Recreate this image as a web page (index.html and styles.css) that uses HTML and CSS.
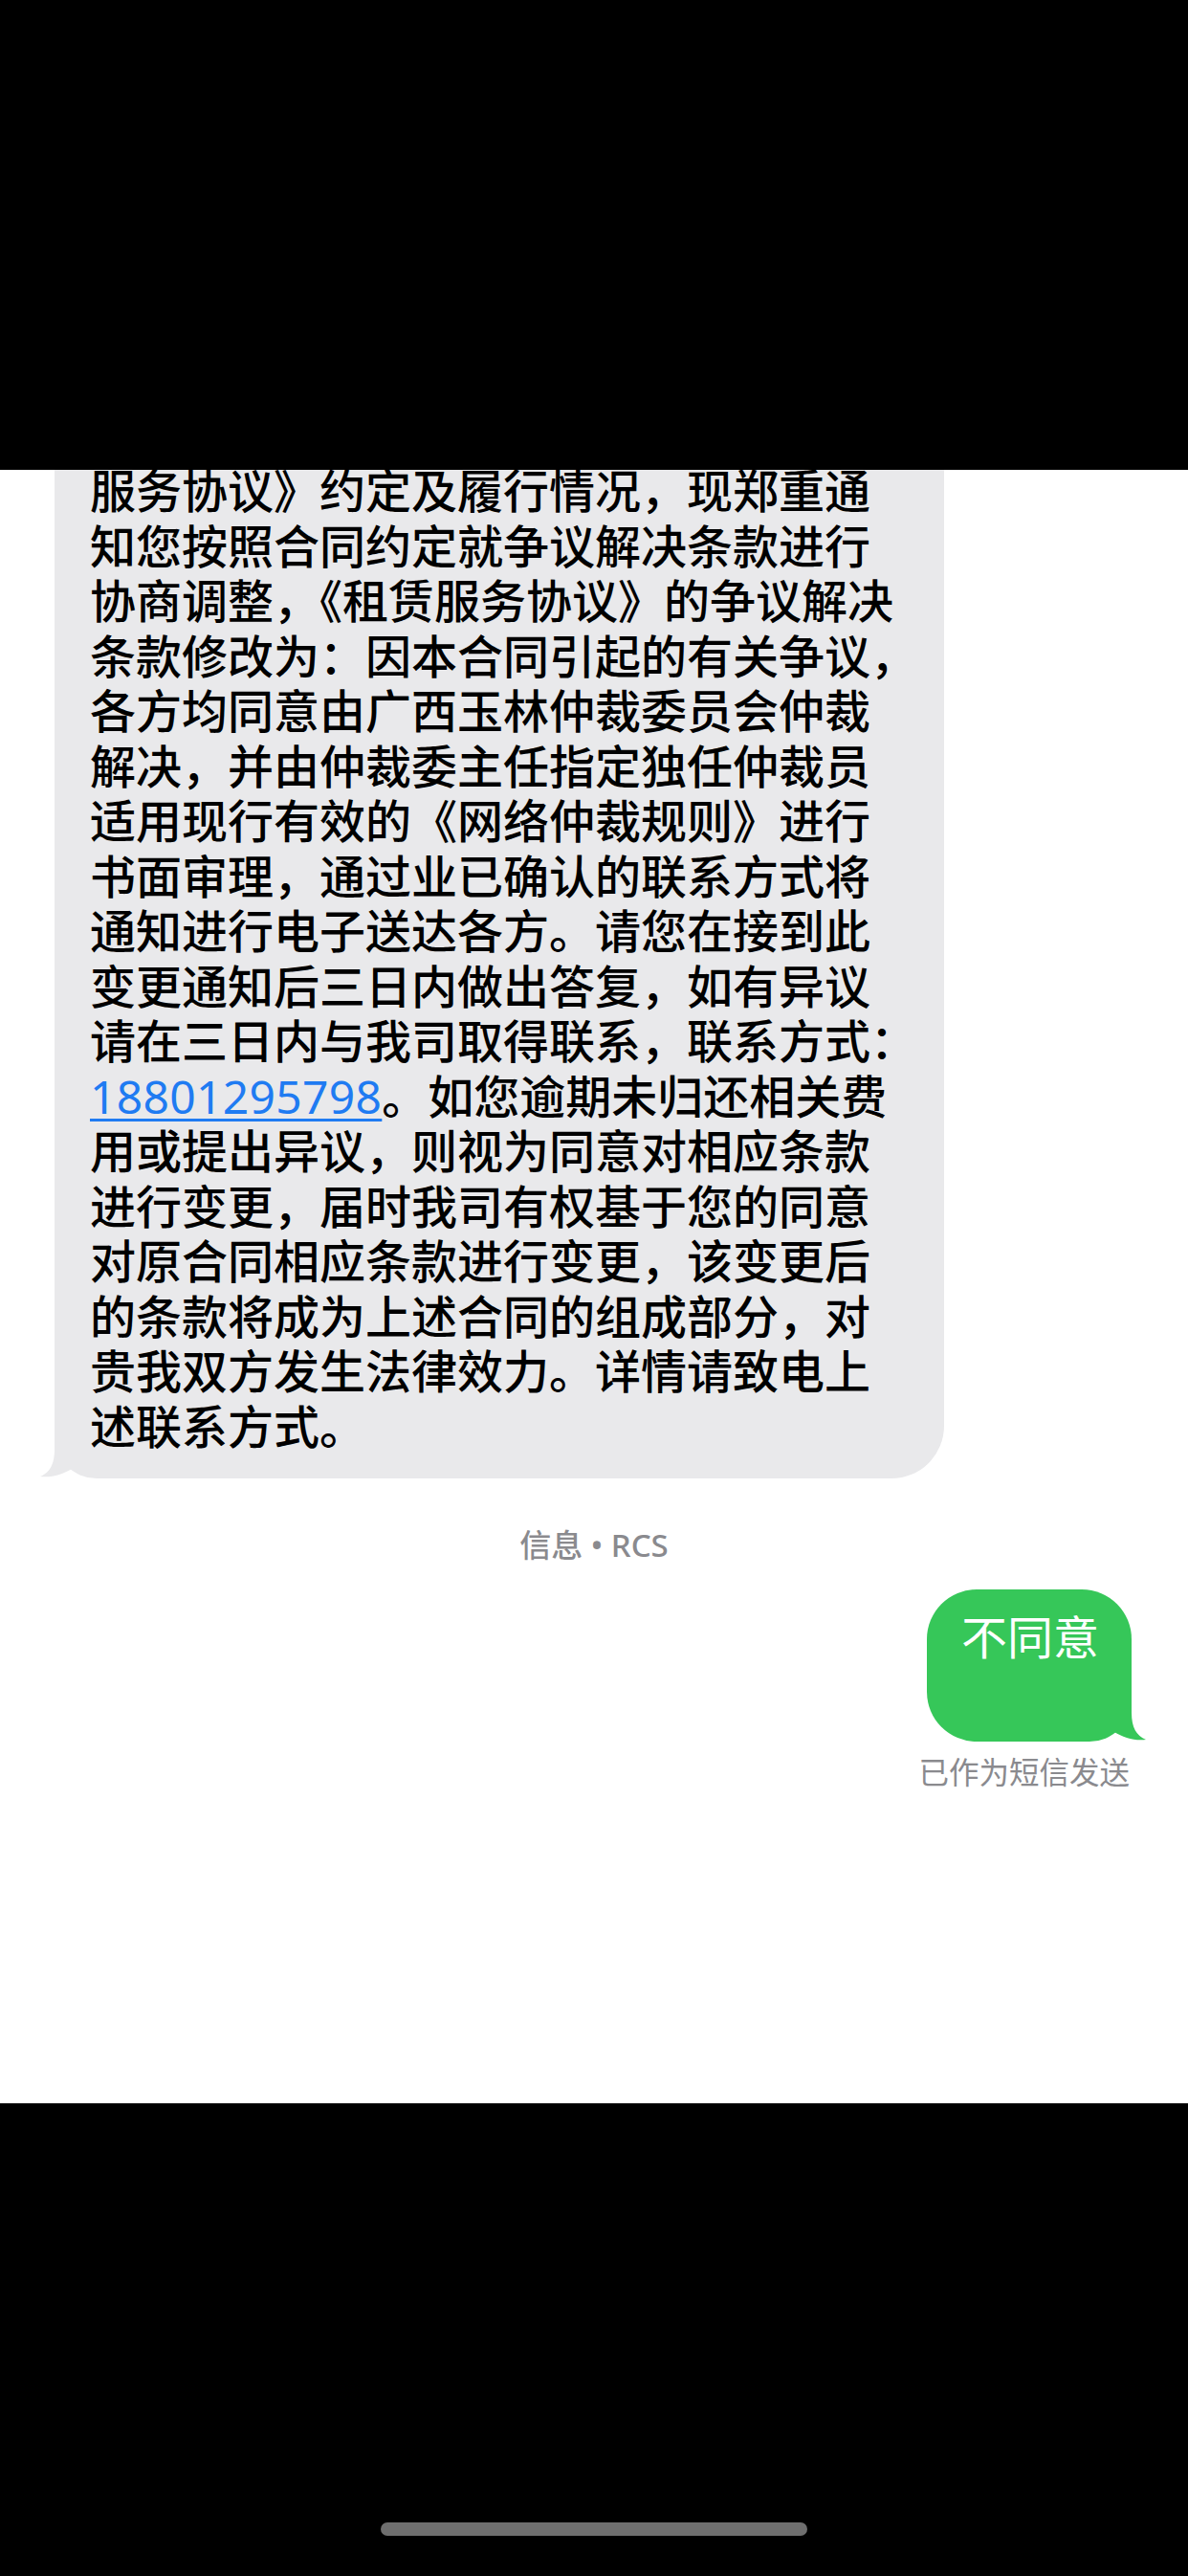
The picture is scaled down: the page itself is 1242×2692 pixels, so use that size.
FILE: index.html
```html
<!DOCTYPE html>
<html lang="zh-CN">
<head>
<meta charset="utf-8">
<title>信息</title>
<link rel="stylesheet" href="styles.css">
</head>
<body>
<div class="screen">
  <div class="mask-top"></div>
  <main class="thread">
    <div class="msg-row-in">
      <div class="bubble-in">
        <div class="line">服务协议》约定及履行情况，现郑重通</div>
        <div class="line">知您按照合同约定就争议解决条款进行</div>
        <div class="line">协商调整，《租赁服务协议》的争议解决</div>
        <div class="line">条款修改为：因本合同引起的有关争议，</div>
        <div class="line">各方均同意由广西玉林仲裁委员会仲裁</div>
        <div class="line">解决，并由仲裁委主任指定独任仲裁员</div>
        <div class="line">适用现行有效的《网络仲裁规则》进行</div>
        <div class="line">书面审理，通过业已确认的联系方式将</div>
        <div class="line">通知进行电子送达各方。请您在接到此</div>
        <div class="line">变更通知后三日内做出答复，如有异议</div>
        <div class="line">请在三日内与我司取得联系，联系方式：</div>
        <div class="line"><a class="phone" href="#">18801295798</a>。如您逾期未归还相关费</div>
        <div class="line">用或提出异议，则视为同意对相应条款</div>
        <div class="line">进行变更，届时我司有权基于您的同意</div>
        <div class="line">对原合同相应条款进行变更，该变更后</div>
        <div class="line">的条款将成为上述合同的组成部分，对</div>
        <div class="line">贵我双方发生法律效力。详情请致电上</div>
        <div class="line">述联系方式。</div>
        <svg class="tail tail-in" width="60" height="50" viewBox="0 0 60 50"><path d="M17 0 L17 20 C17 35 12 44 2 48 C14 49.5 26 45.5 35 40 L35 0 Z" fill="#e9e9eb"/></svg>
      </div>
    </div>

    <div class="service-label">信息 • RCS</div>

    <div class="msg-row-out">
      <div class="bubble-out">
        <div class="line line-out">不同意</div>
        <svg class="tail tail-out" width="60" height="50" viewBox="0 0 60 50"><path d="M43 0 L43 20 C43 35 48 44 58 48 C46 49.5 34 45.5 25 40 L25 0 Z" fill="#36c759"/></svg>
      </div>
    </div>
    <div class="delivery">已作为短信发送</div>
  </main>
  <div class="mask-bottom">
    <div class="home-indicator"></div>
  </div>
</div>
</body>
</html>
```

FILE: styles.css
```css
* {
  box-sizing: border-box;
}

html, body {
  margin: 0;
  padding: 0;
  background: #000;
}

body {
  font-family: "Noto Sans", "Noto Sans CJK SC", sans-serif;
  -webkit-font-smoothing: antialiased;
}

.screen {
  width: 1242px;
  height: 2692px;
  display: flex;
  flex-direction: column;
  overflow: hidden;
}

.mask-top {
  height: 491px;
  flex: none;
  background: #000;
}

.thread {
  height: 1707px;
  flex: none;
  background: #fff;
  overflow: hidden;
  display: flex;
  flex-direction: column;
}

.msg-row-in {
  display: flex;
  padding-left: 57px;
  margin-top: -27px;
}

.bubble-in {
  position: relative;
  width: 930px;
  background: #e9e9eb;
  color: #000;
  border-radius: 0 0 55px 44px;
  padding: 20px 20px 26px 37px;
}

.line {
  font-size: 48px;
  line-height: 57.5px;
  font-weight: 500;
  white-space: nowrap;
}

.line-out {
  font-weight: 400;
}

.phone {
  color: #1f7bf2;
  font-weight: 400;
  letter-spacing: 0.3px;
  text-decoration: underline;
  text-decoration-thickness: 3px;
  text-underline-offset: 5px;
}

.tail {
  position: absolute;
  bottom: 0;
  display: block;
}

.tail-in {
  left: -17px;
}

.tail-out {
  right: -17px;
}

.service-label {
  margin-top: 49px;
  text-align: center;
  font-size: 33px;
  line-height: 42px;
  font-weight: 500;
  color: #8a8a8e;
}

.msg-row-out {
  display: flex;
  justify-content: flex-end;
  padding-right: 59px;
  margin-top: 25px;
}

.bubble-out {
  position: relative;
  background: #36c759;
  color: #fff;
  border-radius: 52px 52px 44px 52px;
  padding: 21px 34px 80px 36px;
}

.delivery {
  margin-top: 12px;
  padding-right: 61px;
  text-align: right;
  font-size: 31.5px;
  line-height: 40px;
  color: #8a8a8e;
}

.mask-bottom {
  flex: 1;
  background: #000;
  display: flex;
  flex-direction: column;
  justify-content: flex-end;
  align-items: center;
  padding-bottom: 42px;
}

.home-indicator {
  width: 446px;
  height: 14px;
  border-radius: 7px;
  background: #6e6e6e;
}
```
